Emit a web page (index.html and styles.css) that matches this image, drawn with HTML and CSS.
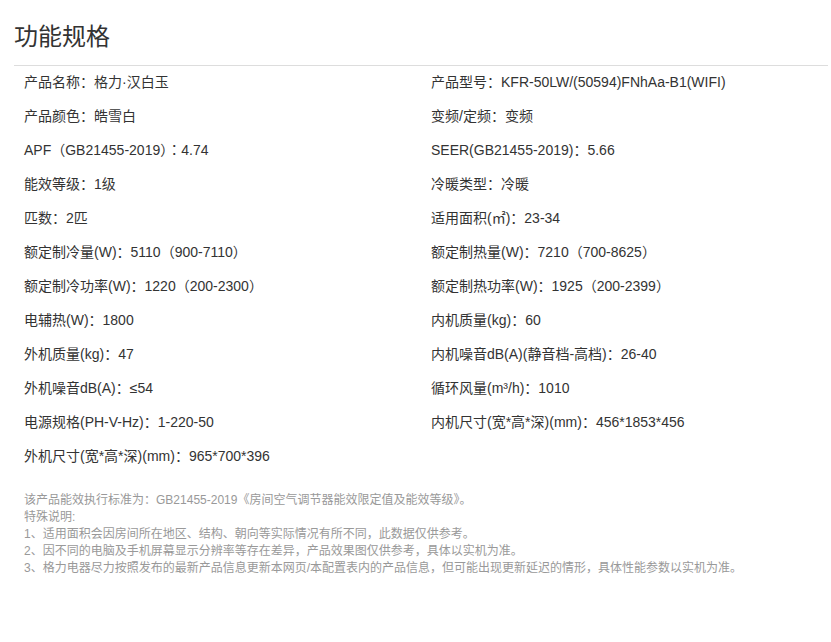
FILE: index.html
```html
<!DOCTYPE html>
<html lang="zh-CN">
<head>
<meta charset="utf-8">
<title>功能规格</title>
<link rel="stylesheet" href="styles.css">
</head>
<body>
<div class="spec">
  <h2 class="spec-title">功能规格</h2>
  <ul class="spec-list">
    <li>产品名称<span class="pc">：</span>格力·汉白玉</li>
    <li>产品型号<span class="pc">：</span>KFR-50LW/(50594)FNhAa-B1(WIFI)</li>
    <li>产品颜色<span class="pc">：</span>皓雪白</li>
    <li>变频/定频<span class="pc">：</span>变频</li>
    <li>APF<span class="pc">（</span>GB21455-2019<span class="pc">）：</span>4.74</li>
    <li>SEER(GB21455-2019)<span class="pc">：</span>5.66</li>
    <li>能效等级<span class="pc">：</span>1级</li>
    <li>冷暖类型<span class="pc">：</span>冷暖</li>
    <li>匹数<span class="pc">：</span>2匹</li>
    <li>适用面积(㎡)<span class="pc">：</span>23-34</li>
    <li>额定制冷量(W)<span class="pc">：</span>5110<span class="pc">（</span>900-7110<span class="pc">）</span></li>
    <li>额定制热量(W)<span class="pc">：</span>7210<span class="pc">（</span>700-8625<span class="pc">）</span></li>
    <li>额定制冷功率(W)<span class="pc">：</span>1220<span class="pc">（</span>200-2300<span class="pc">）</span></li>
    <li>额定制热功率(W)<span class="pc">：</span>1925<span class="pc">（</span>200-2399<span class="pc">）</span></li>
    <li>电辅热(W)<span class="pc">：</span>1800</li>
    <li>内机质量(kg)<span class="pc">：</span>60</li>
    <li>外机质量(kg)<span class="pc">：</span>47</li>
    <li>内机噪音dB(A)(静音档-高档)<span class="pc">：</span>26-40</li>
    <li>外机噪音dB(A)<span class="pc">：</span>≤54</li>
    <li>循环风量(m³/h)<span class="pc">：</span>1010</li>
    <li>电源规格(PH-V-Hz)<span class="pc">：</span>1-220-50</li>
    <li>内机尺寸(宽*高*深)(mm)<span class="pc">：</span>456*1853*456</li>
    <li>外机尺寸(宽*高*深)(mm)<span class="pc">：</span>965*700*396</li>
  </ul>
  <div class="spec-note">
    <p>该产品能效执行标准为<span class="pc">：</span>GB21455-2019《房间空气调节器能效限定值及能效等级》。</p>
    <p>特殊说明:</p>
    <p>1、适用面积会因房间所在地区、结构、朝向等实际情况有所不同<span class="pc">，</span>此数据仅供参考。</p>
    <p>2、因不同的电脑及手机屏幕显示分辨率等存在差异<span class="pc">，</span>产品效果图仅供参考<span class="pc">，</span>具体以实机为准。</p>
    <p>3、格力电器尽力按照发布的最新产品信息更新本网页/本配置表内的产品信息<span class="pc">，</span>但可能出现更新延迟的情形<span class="pc">，</span>具体性能参数以实机为准。</p>
  </div>
</div>
</body>
</html>
```
FILE: styles.css
```css
html, body {
  margin: 0;
  padding: 0;
  background: #fff;
}
body {
  font-family: "Liberation Sans", Arial, "Noto Sans CJK SC", sans-serif;
  color: #333;
}
.spec {
  margin-left: 14px;
  width: 814px;
}
.spec-title {
  margin: 21px 0 0;
  padding: 0 0 12px;
  font-size: 24px;
  line-height: 32px;
  font-weight: normal;
  color: #333;
  border-bottom: 1px solid #ddd;
}
.spec-list {
  list-style: none;
  margin: 0;
  padding: 0 0 0 10px;
  display: grid;
  grid-template-columns: 407px 1fr;
  grid-auto-rows: 32px;
  row-gap: 2px;
}
.spec-list li {
  font-size: 14px;
  line-height: 32px;
  height: 32px;
  color: #333;
  white-space: nowrap;
}
.pc {
  font-family: "Noto Sans CJK TC", "Noto Sans CJK SC", sans-serif;
  line-height: 1;
}
.spec-note {
  margin-top: 20px;
  padding-left: 10px;
  font-size: 12px;
  line-height: 17px;
  color: #999;
}
.spec-note p {
  margin: 0;
  height: 17px;
}
```
